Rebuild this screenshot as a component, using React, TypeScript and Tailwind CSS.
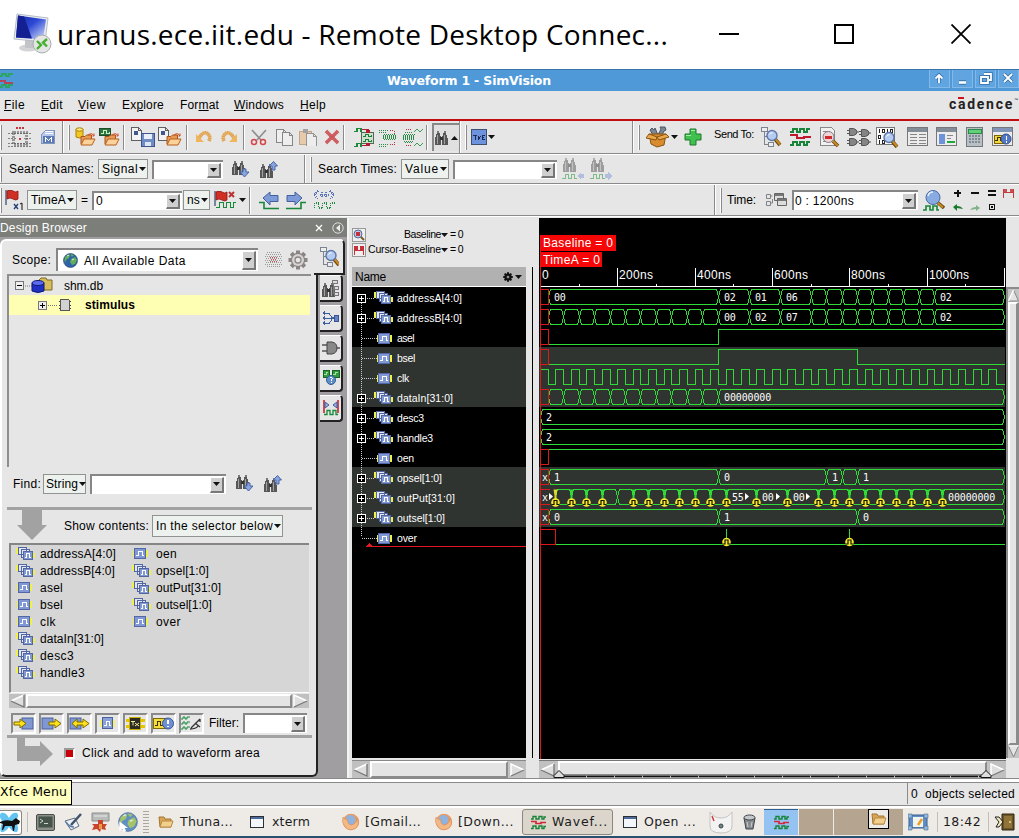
import { useLayoutEffect, useRef, useState, type ReactNode } from "react";

/* ---------- text with a fixed advance width ---------- */
function T({ w, className = "", children }: { w: number; className?: string; children: ReactNode }) {
  const ref = useRef<HTMLSpanElement>(null);
  const [ls, setLs] = useState(0);
  useLayoutEffect(() => {
    const el = ref.current;
    if (!el) return;
    const n = (el.textContent || "").length;
    setLs((prev) => (w - (el.getBoundingClientRect().width - prev * n)) / n);
  }, [w]);
  return (
    <span ref={ref} className={`inline-block shrink-0 whitespace-pre ${className}`} style={{ letterSpacing: ls }}>
      {children}
    </span>
  );
}

/* ---------- small building blocks ---------- */
function Svg({ w, h, children, smooth }: { w: number; h: number; children: ReactNode; smooth?: boolean }) {
  return (
    <svg width={w} height={h} viewBox={`0 0 ${w} ${h}`} className="block shrink-0" fill="none" shapeRendering={smooth ? "auto" : "crispEdges"}>
      {children}
    </svg>
  );
}
const Caret = ({ up }: { up?: boolean }) => (
  <Svg w={7} h={4} smooth>
    <path d={up ? "M0 4H7L3.5 0Z" : "M0 0H7L3.5 4Z"} fill="#111" />
  </Svg>
);
const Handle = () => <div className="h-[25px] w-[2px] shrink-0 border-l border-r border-l-white border-r-[#8a8a8a]" />;
const Edge = ({ className = "" }: { className?: string }) => (
  <div className={`h-full w-[2px] shrink-0 border-l border-r border-l-[#8a8a8a] border-r-white ${className}`} />
);
function MenuButton({ className, w, children }: { className: string; w: number; children: ReactNode }) {
  return (
    <div className={`flex shrink-0 items-center gap-[1px] border border-[#8f9490] bg-[#eef2ee] pl-[3px] ${className}`}>
      <T w={w}>{children}</T>
      <Caret />
    </div>
  );
}
function Entry({ className, children }: { className: string; children?: ReactNode }) {
  return (
    <div className={`flex shrink-0 items-center justify-between border-l-2 border-t-2 border-l-[#868686] border-t-[#868686] bg-white pr-[2px] ${className}`}>
      <div className="flex items-center">{children}</div>
      <div className="my-[1px] flex w-[14px] shrink-0 items-center justify-center self-stretch border-b-2 border-r-2 border-l border-t border-b-[#777] border-l-white border-r-[#777] border-t-white bg-[#cfcfcf]">
        <Caret />
      </div>
    </div>
  );
}

/* ---------- icons ---------- */
const Magnifier = ({ x = 0, y = 0 }: { x?: number; y?: number }) => (
  <g transform={`translate(${x} ${y})`} shapeRendering="auto">
    <path d="M9 9l5 6" stroke="#6b430c" strokeWidth="3.6" />
    <path d="M9.5 9l4.500 5.500" stroke="#c88a24" strokeWidth="2" />
    <circle cx="6" cy="5.500" r="5" fill="#b4ccf2" stroke="#5f77a8" strokeWidth="1.400" />
    <path d="M3.500 4.500q1-2 3-1.800" stroke="#fff" />
  </g>
);
const Folder = ({ x = 0, y = 0 }: { x?: number; y?: number }) => (
  <g transform={`translate(${x} ${y})`} shapeRendering="auto">
    <path d="M1 3.500h4l1.500-1.500h5v9H1z" fill="#e89a55" stroke="#a8541c" />
    <path d="M1 12L4 6h11l-3 6z" fill="#fbd29a" stroke="#b8601f" />
    <path d="M8 2q4-3 6 1l-1.500 0M14 3v-2.500" stroke="#d34a22" />
  </g>
);
const Binoculars = ({ x = 0, y = 0 }: { x?: number; y?: number }) => (
  <g transform={`translate(${x} ${y})`}>
    <path d="M2 2h3v3h1v9H0V8l1-3zM8 2h3l1 3 1 3v6H7V5h1z" fill="#575757" />
    <path d="M2 0h2v2H2zM9 0h2v2H9z" fill="#777" />
    <path d="M2.500 4v9M9.500 4v9" stroke="#a2a2a2" />
    <path d="M5 6h3v3H5z" fill="#333" />
  </g>
);
const FindDown = () => (
  <Svg w={18} h={17}>
    <Binoculars />
    <path d="M11 8h3v3h3l-4.500 5L8 11h3z" fill="#88a5dc" stroke="#4a64a8" shapeRendering="auto" />
  </Svg>
);
const FindUp = () => (
  <Svg w={19} h={17}>
    <Binoculars y={3} />
    <path d="M12 9h3V5h2.500L13.500 0.500 9 5h3z" fill="#88a5dc" stroke="#4a64a8" shapeRendering="auto" />
  </Svg>
);
const FindTime = ({ right }: { right?: boolean }) => (
  <Svg w={23} h={22}>
    <g opacity=".5">
      <Binoculars x={1} />
      <path d="M0 20h3v-4h3v4h3v-4h3v4h3" stroke="#1c9030" />
      <path d={right ? "M15 16h3v-2l4 4-4 4v-2h-3z" : "M22 16h-3v-2l-4 4 4 4v-2h3z"} fill="#7d97d8" />
    </g>
  </Svg>
);
const Waves = () => (
  <Svg w={21} h={20}>
    <path d="M0 5h3V2h4v3h3V2h4v3h3V2h3" stroke="#17843a" strokeWidth="2" />
    <path d="M0 8h7v3h7v-1h7" stroke="#c0182c" strokeWidth="2" />
    <path d="M0 18h3v-3h4v3h3v-3h4v3h3v-3h3" stroke="#17843a" strokeWidth="2" />
  </Svg>
);
const SmallWaves = () => (
  <Svg w={15} h={15} smooth>
    <path d="M0 4h2V1.500h3V4h3V1.500h3V4h2V2h2M0 13.500h2V11h3v2.500h3V11h3v2.500h2v-2h2" stroke="#17843a" strokeWidth="1.400" />
    <path d="M0 6.500h5v2h5v-1h5" stroke="#d2283a" strokeWidth="1.700" />
  </Svg>
);
const Sig = () => (
  <Svg w={17} h={13}>
    <path d="M1 3h15v7H1z" fill="#f0f04a" />
    <path d="M2.500 1.500h11v10h-11z" fill="#8098d4" stroke="#5467a4" />
    <path d="M4 8.500h2.500v-4h4v4H12" stroke="#fff" />
  </Svg>
);
const BusSig = () => (
  <Svg w={19} h={14}>
    <path d="M0 1h3v6H0zM16 6h3v5h-3z" fill="#f0f04a" />
    <path d="M2.500 0.500h8v7h-8zM5.500 2.500h8v8h-8z" fill="#e2e7f6" stroke="#53669f" />
    <path d="M7.500 4.500h9v8h-9z" fill="#8098d4" stroke="#53669f" />
    <path d="M9 10.500h1.500v-4h3v4H15" stroke="#fff" />
  </Svg>
);
const PortBox = ({ kind }: { kind: "in" | "out" | "inout" }) => (
  <Svg w={21} h={13} smooth>
    <rect x={kind === "in" ? 9 : 1} y="1" width="11" height="11" fill="#7f98d2" stroke="#4b5f9c" />
    <path
      d={kind === "in" ? "M1 5h6V2l6 4.500L7 11V8H1z" : kind === "out" ? "M8 5h6V2l6 4.500L14 11V8H8z" : "M3 6.500L8 2v3h6V2l6 4.500L14 11V8H8v3z"}
      fill="#ffe11a"
      stroke="#7c6a00"
    />
  </Svg>
);
const BigFlag = ({ x = 0, y = 0 }: { x?: number; y?: number }) => (
  <g transform={`translate(${x} ${y})`} shapeRendering="auto">
    <path d="M1 0v15" stroke="#566584" strokeWidth="1.500" />
    <path d="M2 1q3-2 6 0t5 0v8q-2 2-5 0t-6 0z" fill="#cf3023" stroke="#8e1410" strokeWidth=".8" />
  </g>
);
const Window = ({ kind }: { kind: "table" | "side" | "alert" }) => (
  <Svg w={22} h={20}>
    <path d="M.5.500h20v18H.5z" fill="#ececec" stroke="#777" />
    <path d="M1 1h19v4H1z" fill={kind === "alert" ? "#8195b9" : "#838d98"} />
    {kind === "table" && <path d="M3 7.500h7M12 7.500h7M3 10.500h7M12 10.500h7M3 13.500h7M12 13.500h7M3 16.500h7M12 16.500h7" stroke="#858585" />}
    {kind === "side" && (
      <>
        <path d="M3 7h6v10H3z" fill="#6d93d9" />
        <path d="M11 8h6M11 11.500h4" stroke="#888" />
        <path d="M11 14.500h8" stroke="#20a83a" strokeWidth="2" />
      </>
    )}
    {kind === "alert" && (
      <>
        <path d="M2 8h9v8H2z" fill="#f5d63c" stroke="#7d6500" />
        <path d="M3 13.500h2v-3h3v3h2" stroke="#3c3000" />
        <circle cx="14" cy="12" r="5" fill="#5177c5" stroke="#32508f" shapeRendering="auto" />
        <path d="M13.500 9h1.500v4h-1.500zM13.500 14h1.500v1.500h-1.500z" fill="#fff" />
      </>
    )}
  </Svg>
);
const Tree = ({ w = 22, h = 22 }: { w?: number; h?: number }) => (
  <Svg w={w} h={h}>
    <path d="M1.500 1.500h6v4h-6zM8.500 8.500h5v4h-5zM8.500 16.500h5v4h-5z" fill="#eee" stroke="#7c8490" />
    <path d="M4.500 6v12.500H8M4.500 10.500H8" stroke="#7c8490" />
    <Magnifier x={6} y={4} />
  </Svg>
);
const Gates = ({ x = 0, y = 0 }: { x?: number; y?: number }) => (
  <g transform={`translate(${x} ${y})`} shapeRendering="auto">
    <path d="M0 2.500h3M0 5.500h3M9 4h3" stroke="#555" />
    <path d="M2.500.500h4q3.500 1 3.500 3.500T6.500 7.500h-4z" fill="#858585" stroke="#555" />
  </g>
);
const Page = ({ x = 0, y = 0 }: { x?: number; y?: number }) => (
  <g transform={`translate(${x} ${y})`}>
    <path d="M.5.500h7l3 3v10H.5z" fill="#f2f2f2" stroke="#5f5f5f" />
    <path d="M7.500.500v3h3" stroke="#5f5f5f" />
  </g>
);
const WinGlyph = () => (
  <Svg w={15} h={13}>
    <path d="M.5.500h13v11H.5z" fill="#f3f6fb" stroke="#2b2f36" />
    <path d="M1 1h12v2H1z" fill="#4c6a9c" />
  </Svg>
);
const Firefox = () => (
  <Svg w={18} h={18} smooth>
    <circle cx="9" cy="9" r="8.200" fill="#ea9a62" />
    <circle cx="8.500" cy="7" r="5" fill="#8fb2df" />
    <path d="M1 4q2 3 5 3-1 2 1 4t5 0 3-6q3 6-1 10-7 4-11-1T1 4z" fill="#f3b883" stroke="#d5844f" strokeWidth=".5" />
  </Svg>
);
const Earth = ({ s = 15, pale }: { s?: number; pale?: boolean }) => (
  <svg width={s} height={s} viewBox="0 0 15 15" className="block shrink-0">
    <circle cx="7.500" cy="7.500" r="7" fill={pale ? "#5f8fc4" : "#2f62a6"} stroke={pale ? "#4a6f9a" : "#1e3c66"} strokeWidth=".6" />
    <path d="M2 4q3-3 5-2l-1 3-3 2-1 3q-1-3 0-6zM8 6l4-2 2 3-2 4-3 1-2-3zM7 1l4 1-2 2z" fill={pale ? "#a5c46a" : "#5fae5a"} />
    <path d="M4 3l2-1M9 7l2-1" stroke="#dff0df" />
    {pale && <path d="M1 7v7l2-1.500 1.500 2.500 1.500-1-1-2h2.500z" fill="#fff" />}
  </svg>
);
const Gear = ({ s, color, fill }: { s: number; color: string; fill: string }) => (
  <svg width={s} height={s} viewBox="-10 -10 20 20" className="block shrink-0">
    {[0, 45, 90, 135].map((a) => (
      <path key={a} d="M-2-9.500h4v19h-4z" fill={color} transform={`rotate(${a})`} />
    ))}
    <circle r="7.200" fill={color} />
    <circle r="6" fill={fill === "none" ? color : "#d6d2d0"} />
    <circle r="3" fill={fill === "none" ? "#b0b0b0" : "#e6e6e6"} stroke={color} strokeWidth="1.300" />
  </svg>
);
const ScrollArrow = ({ left }: { left?: boolean }) => (
  <div className="flex w-[17px] shrink-0 items-center justify-center self-stretch bg-[#c0c0c0]">
    <Svg w={15} h={14} smooth>
      <path d={left ? "M14 1v12L1 7z" : "M1 1v12L14 7z"} fill="#dedede" />
      <path d={left ? "M14 1L1 7" : "M1 13V1l13 6"} stroke="#fff" strokeWidth="1.500" />
      <path d={left ? "M14 1v12L1 7" : "M1 13L14 7"} stroke="#777" strokeWidth="1.300" />
    </Svg>
  </div>
);
const Thumb = ({ className }: { className: string }) => (
  <div className={`border-b-2 border-l-2 border-r-2 border-t-2 border-b-[#8b8b8b] border-l-white border-r-[#8b8b8b] border-t-white bg-[#e4e4e4] ${className}`} />
);

/* ---------- remote desktop frame ---------- */
function RemoteTitle() {
  return (
    <div className="flex h-[69px] shrink-0 items-center bg-white pb-[1px] text-black">
      <div className="w-[57px] shrink-0 pl-[12px]">
        <Svg w={40} h={42} smooth>
          <defs>
            <linearGradient id="scr" x1="0" y1="0" x2="1" y2="1">
              <stop offset="0" stopColor="#16269e" />
              <stop offset=".45" stopColor="#2d49d6" />
              <stop offset="1" stopColor="#dbe6fb" />
            </linearGradient>
          </defs>
          <ellipse cx="16" cy="35" rx="9" ry="3.500" fill="#d4d4d6" />
          <path d="M13 27h8l1 8h-9z" fill="#c2c4c8" />
          <path d="M5 1l31 4-3 24-31-3z" fill="#e8ecf2" stroke="#b6bcc6" />
          <path d="M6 2.500l28 4-3 20-27-2z" fill="url(#scr)" />
          <path d="M6 2.500l6 1 8 22-16-1z" fill="#141f92" />
          <circle cx="30" cy="31" r="9" fill="#e4e6e4" stroke="#a9adab" />
          <path d="M25 28l4 4-4 4M35 26l-4 3.500 4 4" stroke="#45b02f" strokeWidth="2.400" />
        </Svg>
      </div>
      <T w={611} className="font-['Open_Sans'] text-[28px] leading-[40px]">uranus.ece.iit.edu - Remote Desktop Connec...</T>
      <div className="ml-[51px] h-[2px] w-[20px] bg-black" />
      <div className="ml-[95px] h-[20px] w-[20px] border-2 border-black" />
      <div className="ml-[97px]">
        <Svg w={20} h={20} smooth>
          <path d="M.5.500l19 19M19.500.500l-19 19" stroke="#000" strokeWidth="1.800" />
        </Svg>
      </div>
    </div>
  );
}

function WindowTitle() {
  return (
    <div className="flex h-[22px] shrink-0 items-center border-t border-[#3773a8] bg-[#4f99d9]">
      <div className="w-[387px] shrink-0"><Svg w={13} h={15}><path d="M0 3h2v-2h4v2h3v-2h4M0 14h2v-2h4v2h3v-2h4" stroke="#2aa564" strokeWidth="2" /><path d="M0 7.500h5v2h8" stroke="#b1455c" strokeWidth="2" /></Svg></div>
      <T w={164} className="font-['DejaVu_Sans'] text-[12.5px] font-bold leading-[20px] text-white">Waveform 1 - SimVision</T>
      <div className="ml-auto flex h-[18px] gap-[2px] self-start">
        {["M9 13V6M5.500 8.500L9 5l3.500 3.500", "M6 12.500h7", "M8 4h7v6h-2M5 7h7v6H5z", "M5 4l8 8M13 4l-8 8"].map((d, i) => (
          <div key={i} className="w-[21px] border border-t-0 border-[#82b9e8] bg-[#60a5df]">
            <Svg w={19} h={17} smooth>
              <path d={d} stroke="#3470a6" strokeWidth={i === 1 ? 4.500 : 3.400} />
              <path d={d} stroke="#fff" strokeWidth={i === 1 ? 2.600 : 1.800} />
            </Svg>
          </div>
        ))}
      </div>
    </div>
  );
}

function MenuBar() {
  return (
    <div className="flex h-[30px] shrink-0 items-center border-b-2 border-[#c00d12] pb-[1px] pl-[4px] text-[12px]">
      <div className="w-[37px]"><T w={21}><u>F</u>ile</T></div>
      <div className="w-[37px]"><T w={22}><u>E</u>dit</T></div>
      <div className="w-[44px]"><T w={28}><u>V</u>iew</T></div>
      <div className="w-[58px]"><T w={42}>Ex<u>p</u>lore</T></div>
      <div className="w-[54px]"><T w={39}>For<u>m</u>at</T></div>
      <div className="w-[66px]"><T w={50}><u>W</u>indows</T></div>
      <T w={26}><u>H</u>elp</T>
      <div className="ml-auto flex flex-col pr-[1px]">
        <div className="ml-[9px] h-[2px] w-[6px] bg-[#d0131b]" />
        <div className="-mt-[3px] flex"><T w={65} className="font-['Roboto'] text-[14px] font-bold leading-[16px] text-[#222]">cadence</T><span className="text-[4px] leading-[8px]">™</span></div>
      </div>
    </div>
  );
}

/* ---------- toolbars ---------- */
function MainToolbar() {
  return (
    <div className="flex h-[33px] shrink-0 items-center border-b border-[#8a8a8a] bg-[#e6e6e6]">
      <div className="w-[8px]"><Handle /></div>
      <div className="w-[33px]"><Svg w={24} h={22}><g stroke="#555" strokeDasharray="2 1"><path d="M5.500 6.500h13v12h-13z" strokeWidth="3" opacity=".55" /><path d="M0 7.500h24M0 12.500h24M0 17.500h24M0 20.500h24" opacity=".7" /></g><path d="M8 9h8v7H8z" fill="#e6e6e6" /><path d="M8 1.500h9M11 12.500h2" stroke="#c8353a" strokeWidth="2" strokeDasharray="2 1" /></Svg></div>
      <div className="w-[21px]"><Svg w={15} h={16}><path d="M.5 5.500l4-4h9v13H.5z" fill="#b7c9ea" stroke="#8195ba" /><path d="M4 2.500h8M4 4.500h8" stroke="#fff" /><path d="M2 7h11v7H2z" fill="#5a7ab5" /><path d="M4.500 13V9L7.500 11.500 10.500 9v4" stroke="#fff" /></Svg></div>
      <Edge />
      <div className="w-[11px] pl-[4px]"><Handle /></div>
      <div className="w-[24px]"><Svg w={21} h={20} smooth><path d="M1 2v8q3.500 2 7 0V2z" fill="#f3c824" stroke="#a87e08" /><ellipse cx="4.500" cy="2.500" rx="3.500" ry="1.700" fill="#ffea7a" stroke="#a87e08" /><Folder x={5} y={6} /></Svg></div>
      <div className="w-[24px]"><Svg w={21} h={20}><path d="M.5 1.500h11v7H.5z" fill="#2d7440" stroke="#1c4c2a" /><path d="M2 6.500h2v-3h3v3h3v-2" stroke="#c8f0c0" /><Folder x={5} y={6} /></Svg></div>
      <div className="w-[8px]"><Edge className="!h-[25px]" /></div>
      <div className="w-[27px]"><Svg w={25} h={20}><Page /><path d="M3 4h4v4H3z" fill="#42588c" /><path d="M10.500 6.500h13v13h-13z" fill="#6f8dc4" stroke="#3d5588" /><path d="M13 7h8v5h-8z" fill="#e9effa" /><path d="M14 15h6v4h-6z" fill="#dde6f5" /></Svg></div>
      <div className="w-[28px]"><Svg w={25} h={20}><Page /><path d="M3 4h4v4H3z" fill="#42588c" /><Folder x={8} y={6} /></Svg></div>
      <div className="w-[9px]"><Edge className="!h-[25px]" /></div>
      <div className="w-[24px]"><Svg w={19} h={17} smooth><path d="M4 9Q9 1 13 5q3 3 1 7" stroke="#eab672" strokeWidth="3.500" /><path d="M4 9Q9 1 13 5q3 3 1 7" stroke="#d48d2c" strokeWidth="3.500" strokeDasharray="1 1" opacity=".5" /><path d="M1 5v8h8z" fill="#efb55c" /></Svg></div>
      <div className="w-[24px]"><Svg w={19} h={17} smooth><path d="M15 9Q10 1 6 5q-3 3-1 7" stroke="#eab672" strokeWidth="3.500" /><path d="M15 9Q10 1 6 5q-3 3-1 7" stroke="#d48d2c" strokeWidth="3.500" strokeDasharray="1 1" opacity=".5" /><path d="M18 5v8h-8z" fill="#efb55c" /></Svg></div>
      <div className="w-[7px]"><Edge className="!h-[25px]" /></div>
      <div className="w-[26px]"><Svg w={18} h={17} smooth><path d="M2 1l9 10M16 1L7 11" stroke="#8d8d8d" strokeWidth="1.600" /><circle cx="4" cy="13" r="2.500" stroke="#d2484b" strokeWidth="1.500" /><circle cx="13" cy="13" r="2.500" stroke="#d2484b" strokeWidth="1.500" /></Svg></div>
      <div className="w-[23px]"><Svg w={18} h={17}><g opacity=".7"><Page /><Page x={6} y={3} /></g></Svg></div>
      <div className="w-[25px]"><Svg w={18} h={17}><g opacity=".6"><path d="M.5 2.500h12v13H.5z" fill="#e6b982" stroke="#a87c4c" /><path d="M4 0h5v4H4z" fill="#777" /><Page x={7} y={4} /></g></Svg></div>
      <div className="w-[19px]"><Svg w={17} h={16} smooth><path d="M2 2l12 12M14 2L2 14" stroke="#d8686b" strokeWidth="3.400" /><path d="M2 2l12 12M14 2L2 14" stroke="#a8383c" strokeWidth="3.400" strokeDasharray="1 1" opacity=".4" /></Svg></div>
      <div className="w-[11px]"><Edge className="!h-[25px]" /></div>
      <div className="w-[25px]"><Svg w={22} h={21}><path d="M0 4.500h3v-3h4v3M0 19.500h3v-3h4v3" stroke="#1c8a3a" strokeWidth="1.500" /><path d="M7.500 5.500h12v11h-12z" fill="#cfe0cf" stroke="#4c6b52" /><path d="M9 9.500h2v-2h3v2h3v-2M9 14.500h2v-2h3v2h3v-2" stroke="#19803a" /><path d="M8 2.500h6v3M8 18.500h6v-2" stroke="#b21c2e" /><path d="M12 3h4v3h-4zM12 16h4v3h-4z" fill="#b21c2e" /></Svg></div>
      <div className="w-[23px]"><Svg w={20} h={21}><g strokeDasharray="1 1"><path d="M0 3.500h9M0 5.500h7M0 17.500h9M0 19.500h7M5 7.500h12M4 8.500h14M4 9.500h14M4 10.500h14M4 11.500h14M5 12.500h12" stroke="#2a8a46" /><path d="M11 3.500h4v3M11 17.500h4v-3" stroke="#b8303f" /></g></Svg></div>
      <div className="w-[24px]"><Svg w={22} h={21}><g strokeDasharray="1 1"><path d="M3 5.500h8M2 7.500h11M1 8.500h12M1 9.500h12M1 10.500h12M1 11.500h12M1 12.500h12M2 14.500h9M3 15.500h8" stroke="#2a8a46" /><path d="M4 2.500h5M4 18.500h5" stroke="#b8303f" /></g><path d="M12 5l3-3 3 3 3-3M12 19l3-3 3 3 3-3" stroke="#3c9a56" /></Svg></div>
      <div className="w-[6px]"><Edge className="!h-[25px]" /></div>
      <div className="flex h-[28px] w-[27px] shrink-0 items-center gap-[3px] border-l-2 border-t-2 border-l-[#888] border-t-[#888] bg-[#e0e0e0] pl-[1px]"><Svg w={13} h={15}><Binoculars /></Svg><Caret up /></div>
      <Edge />
      <div className="w-[10px] pl-[4px]"><Handle /></div>
      <div className="flex w-[161px] items-center gap-[1px]"><Svg w={16} h={17}><path d="M.5.500h15v15H.5z" fill="#6e93de" stroke="#3f4f6c" /><path d="M2 6.500h4M4 6.500v4M7 7.500l2.500 3M9.500 7.500l-2.500 3M14 6.500h-3v4h3M11 8.500h2" stroke="#1c2b50" /></Svg><Caret /></div>
      <Edge />
      <div className="w-[12px] pl-[4px]"><Handle /></div>
      <div className="flex w-[38px] items-center gap-[2px]"><Svg w={23} h={22} smooth><path d="M7 9L4 4l2-2 2 2 1-2 3 7M12 9l3-6-1-2 5 0 1 3-2 1-2 4" fill="#7d8794" stroke="#4b5766" /><path d="M3 8h17l-2 11-7 2-6-3z" fill="#d98c2e" stroke="#8a5312" /><path d="M3 8l-3 4 10 2 1-3zM20 8l3 3-10 3-2-3z" fill="#e9a84c" stroke="#8a5312" /></Svg><Caret /></div>
      <div className="w-[30px]"><Svg w={18} h={18} smooth><path d="M6 1h6v5h5v6h-5v5H6v-5H1V6h5z" fill="#3fc04f" stroke="#1c7a2a" /><path d="M7 2.500h4M2 7.500h5" stroke="#a6eba8" /></Svg></div>
      <div className="w-[46px] pb-[9px]"><T w={40} className="text-[11px]">Send To:</T></div>
      <div className="w-[30px]"><Tree /></div>
      <div className="w-[29px]"><Waves /></div>
      <div className="w-[28px]"><Svg w={22} h={21}><path d="M1.500.500h11l3 3v15h-14z" fill="#f0f0f0" stroke="#888" /><path d="M4 4h7M4 14h7" stroke="#888" /><path d="M14 14l5 5" stroke="#6b430c" strokeWidth="3.500" shapeRendering="auto" /><path d="M14 14l5 5" stroke="#c88a24" strokeWidth="2" shapeRendering="auto" /><circle cx="9.500" cy="10" r="5.500" fill="#f2d3d3" stroke="#7d7d8c" shapeRendering="auto" /><path d="M6 9h7v3H6z" fill="#cf2a2e" /></Svg></div>
      <div className="w-[29px]"><Svg w={24} h={20}><Gates y={1} /><Gates x={12} y={2} /><Gates y={11} /><Gates x={12} y={11} /></Svg></div>
      <div className="w-[31px]"><Svg w={23} h={21}><path d="M.5.500h18v17H.5z" fill="#fafafa" stroke="#777" /><path d="M3.500 2v4M6.500 2.500h2v3h-2zM11.500 2v4M14.500 2.500h2v3h-2zM2.500 8.500h2v3h-2zM16.500 8v4M3.500 13v4M6.500 13.500h2v3h-2z" stroke="#222" /><Magnifier x={7} y={5} /></Svg></div>
      <div className="w-[29px]"><Window kind="table" /></div>
      <div className="w-[30px]"><Window kind="side" /></div>
      <div className="w-[26px]"><Svg w={17} h={20}><path d="M.5.500h16v19H.5z" fill="#b9c0c4" stroke="#717a80" /><path d="M2 2h13v4H2z" fill="#62d17a" stroke="#2c8a45" /><path d="M3 9h11M3 12h11M3 15h11" stroke="#7f8b96" strokeWidth="2" strokeDasharray="2 1" /></Svg></div>
      <Window kind="alert" />
    </div>
  );
}

function SearchToolbar() {
  return (
    <div className="flex h-[30px] shrink-0 items-center border-b border-t border-b-[#8a8a8a] border-t-white bg-[#e6e6e6] text-[12px]">
      <div className="w-[9px]"><Handle /></div>
      <div className="w-[89px]"><T w={85}>Search Names:</T></div>
      <div className="w-[54px]"><MenuButton className="h-[20px] w-[50px]" w={36}>Signal</MenuButton></div>
      <div className="w-[80px]"><Entry className="h-[19px] w-[71px]" /></div>
      <div className="w-[28px]"><FindDown /></div>
      <div className="w-[44px]"><FindUp /></div>
      <Edge />
      <div className="w-[12px] pl-[4px]"><Handle /></div>
      <div className="w-[83px]"><T w={79}>Search Times:</T></div>
      <div className="w-[52px]"><MenuButton className="h-[20px] w-[48px]" w={34}>Value</MenuButton></div>
      <div className="w-[109px]"><Entry className="h-[19px] w-[104px]" /></div>
      <div className="w-[28px]"><FindTime /></div>
      <FindTime right />
    </div>
  );
}

function TimeToolbar() {
  return (
    <div className="flex h-[32px] shrink-0 items-center border-b border-t border-b-[#8a8a8a] border-t-white bg-[#e6e6e6] text-[12px]">
      <div className="w-[5px]"><Handle /></div>
      <div className="w-[22px]"><Svg w={20} h={21} smooth><BigFlag /><path d="M9 14l4 5M13 14l-4 5" stroke="#233c78" strokeWidth="1.300" /><path d="M15 14l2-1v7" stroke="#111" /></Svg></div>
      <div className="w-[54px]"><MenuButton className="h-[20px] w-[50px]" w={35}>TimeA</MenuButton></div>
      <div className="w-[11px]">=</div>
      <div className="w-[91px]"><Entry className="h-[19px] w-[90px]"><span className="pl-[2px]">0</span></Entry></div>
      <div className="w-[31px]"><MenuButton className="h-[20px] w-[27px]" w={13}>ns</MenuButton></div>
      <div className="flex w-[35px] items-center gap-[2px]"><Svg w={23} h={18}><BigFlag /><path d="M15 1l5 5M20 1l-5 5" stroke="#b83236" strokeWidth="2" shapeRendering="auto" /><path d="M2 16.500h3v-5h4v5h3v-5h4v5h3v-5h3" stroke="#168a38" /></Svg><Caret /></div>
      <div className="w-[10px]"><Edge className="!h-[27px]" /></div>
      <div className="w-[27px]"><Svg w={21} h={19} smooth><path d="M0 11.500h5v6h15" stroke="#17853a" strokeWidth="1.600" /><path d="M4 7l7-6v3.500h8v6h-8V14z" fill="#7d9ad9" stroke="#445f9d" /></Svg></div>
      <div className="w-[27px]"><Svg w={21} h={19} smooth><path d="M0 17.500h15v-6h5" stroke="#17853a" strokeWidth="1.600" /><path d="M16 7L9 1v3.500H1v6h8V14z" fill="#7d9ad9" stroke="#445f9d" /></Svg></div>
      <div className="w-[401px]"><Svg w={23} h={20}><g strokeDasharray="1 1"><path d="M5 1L1 5l4 4M17 1l4 4-4 4M7 5h9M9 2v6M13 2v6" stroke="#5a75b8" strokeWidth="1.500" /><path d="M1.500 18v-5h4v5h4v-5h4v5h4v-5h4" stroke="#1f8a3c" strokeWidth="1.300" /></g></Svg></div>
      <Edge />
      <div className="w-[11px] pl-[4px]"><Handle /></div>
      <div className="w-[38px]"><T w={29}>Time:</T></div>
      <div className="w-[27px]"><Svg w={22} h={15} smooth><path d="M1.500 1.500h4v4h-4zM1.500 8.500h4v4h-4zM5 3h2.500M5 10h2.500v-4" stroke="#7f8286" /><path d="M9.500.500h9v7h-9zM12.500 5.500h9v7h-9z" fill="#ddd" stroke="#666" /><path d="M10 2h8M13 7h8" stroke="#777" strokeWidth="2" /></Svg></div>
      <div className="w-[131px]"><Entry className="h-[20px] w-[126px]"><span className="pl-[1px]"><T w={59}>0 : 1200ns</T></span></Entry></div>
      <div className="w-[30px]"><Svg w={23} h={21} smooth><path d="M14 12l7 6" stroke="#6b430c" strokeWidth="3.600" /><path d="M14 12l6 5.500" stroke="#c88a24" strokeWidth="2" /><circle cx="10" cy="7.500" r="7" fill="#88abe2" stroke="#4a68a4" /><path d="M5 6q1-4 5-4" stroke="#e6effc" strokeWidth="1.500" /><path d="M0 20h3v-4h4v4h3v-4h4v4h2" stroke="#17853a" strokeWidth="1.600" /></Svg></div>
      <Svg w={64} h={24}>
        <path d="M1 5h7M4.500 1.500v7M18 5h8M35 3h8M35 7h8" stroke="#111" strokeWidth="2" />
        <path d="M50.500 1v9M60.500 1v9M51 4.500h9" stroke="#c03c42" />
        <path d="M51 1h3v3h-3zM57 1h3v3h-3z" fill="#c95055" />
        <path d="M0 19l4-3v2q4 0 6 3l-6-1v3z" fill="#1a7a2c" shapeRendering="auto" />
        <path d="M27 20l-4-3v2q-4 0-6 3l6-1v2z" fill="#7fb488" shapeRendering="auto" />
        <path d="M36.500 16.500h5v5h-5zM38.500 18.500h1v1h-1z" stroke="#111" />
      </Svg>
    </div>
  );
}

/* ---------- design browser ---------- */
const Expander = ({ minus }: { minus?: boolean }) => (
  <Svg w={9} h={9}>
    <path d="M.5.500h8v8h-8z" fill="#eee" stroke="#777" />
    <path d={minus ? "M2 4.500h5" : "M2 4.500h5M4.500 2v5"} stroke="#000" />
  </Svg>
);

const contents: [string, number, boolean][][] = [
  [["addressA[4:0]", 76, true], ["addressB[4:0]", 75, true], ["asel", 23, false], ["bsel", 23, false], ["clk", 16, false], ["dataIn[31:0]", 64, true], ["desc3", 34, true], ["handle3", 45, true]],
  [["oen", 21, false], ["opsel[1:0]", 53, true], ["outPut[31:0]", 65, true], ["outsel[1:0]", 56, true], ["over", 25, false]],
];

const filters: ReactNode[] = [
  <PortBox kind="in" />,
  <PortBox kind="out" />,
  <PortBox kind="inout" />,
  <Svg w={21} h={13}><path d="M3 3h15v7H3z" fill="#f3f36a" /><path d="M5.500.500h10v11h-10z" fill="#8aa1d8" stroke="#4b5f9c" /><path d="M7 8.500h2.500v-4h3v4H14" stroke="#fff" /></Svg>,
  <Svg w={21} h={13}><path d="M1 3.500h19M1 9.500h19" stroke="#e6c400" strokeWidth="3" /><path d="M4.500.500h11v12h-11z" fill="#2b2b22" stroke="#c9ac00" /><path d="M6 4.500h4M8 4.500v4M10 6l4 3M14 6l-4 3" stroke="#f5e8a0" shapeRendering="auto" /></Svg>,
  <Svg w={21} h={13}><path d="M.5 1.500h13v10H.5z" fill="#f5dc3c" stroke="#7d6a00" /><path d="M2 8.500h2v-4h3v4h3v-4h2" stroke="#3c3400" /><circle cx="15" cy="6.500" r="5.500" fill="#6f8fd4" stroke="#3a559a" shapeRendering="auto" /><path d="M15 3v4M15 9v1" stroke="#fff" strokeWidth="1.500" /></Svg>,
  <Svg w={21} h={14} smooth><path d="M0 3h2V1h2v2h2V1h3M0 8h2V6h2v2h2V6h3M0 13h2v-2h2v2h2v-2h3" stroke="#1b8a3c" /><path d="M10 12l9-9M9 13q6 0 8-3M19 3v3M14 7l5 4" stroke="#333" strokeWidth="1.300" /></Svg>,
];

function BrowserPanel() {
  return (
    <div className="mt-[2px] flex h-[538px] w-[318px] shrink-0 flex-col rounded-[6px] rounded-tr-none border-b-2 border-l-2 border-r-2 border-t-2 border-b-[#222] border-l-white border-r-[#222] border-t-white bg-[#e6e6e6] pl-[5px]">
      <div className="flex h-[33px] shrink-0 items-center pt-[4px]">
        <div className="w-[49px] pl-[5px]"><T w={39}>Scope:</T></div>
        <div className="w-[209px]">
          <Entry className="h-[23px] w-[202px]"><div className="flex items-center gap-[6px] pl-[5px]"><Earth /><T w={102}>All Available Data</T></div></Entry>
        </div>
        <div className="w-[23px]"><Svg w={18} h={16}><g strokeDasharray="1 1"><path d="M2 .5h14M1 2.500h16M0 4.500h18M1 6.500h16M0 8.500h18M1 10.500h16M0 12.500h18M2 14.500h14" stroke="#999" /><path d="M5 5.500h8M6 7.500h6M5 9.500h8" stroke="#d05054" /></g></Svg></div>
        <Gear s={20} color="#8a8583" fill="#ddd" />
      </div>
      <div className="flex h-[193px] w-[304px] shrink-0 flex-col border-l-2 border-t-2 border-[#8e8e8e]">
        <div className="flex h-[19px] items-center pl-[6px]">
          <Expander minus />
          <Svg w={40} h={17} smooth>
            <path d="M1 9h8" stroke="#777" strokeDasharray="1 1" />
            <path d="M14 4l3-3h5l1 2h5v10H14z" fill="#d8bd5c" stroke="#7d6820" />
            <path d="M8 6v8q6 3 12 0V6z" fill="#1f2fc4" stroke="#101a70" />
            <ellipse cx="14" cy="6" rx="6" ry="2.500" fill="#5b6cf2" stroke="#101a70" />
          </Svg>
          <T w={39}>shm.db</T>
        </div>
        <div className="flex h-[20px] w-[301px] items-center bg-[#ffffb4] pl-[29px]">
          <Expander />
          <Svg w={38} h={14}>
            <path d="M1 7.500h10" stroke="#777" strokeDasharray="1 1" />
            <path d="M12 3.500h12M12 7.500h12M12 10.500h12" stroke="#444" />
            <path d="M13.500 1.500h8l1 1v10h-9z" fill="#d2d2d2" stroke="#555" />
          </Svg>
          <T w={50} className="font-bold">stimulus</T>
        </div>
      </div>
      <div className="flex h-[40px] shrink-0 items-center pb-[7px]">
        <div className="w-[36px] pl-[6px]"><T w={28}>Find:</T></div>
        <div className="w-[47px]"><MenuButton className="h-[20px] w-[43px] !pl-[2px]" w={32}>String</MenuButton></div>
        <div className="w-[146px]"><Entry className="h-[20px] w-[136px]" /></div>
        <div className="w-[28px]"><FindDown /></div>
        <FindUp />
      </div>
      <div className="h-[3px] w-[305px] shrink-0 bg-[#a2a2a2]" />
      <div className="flex h-[33px] shrink-0 pl-[10px]">
        <div className="w-[47px]"><Svg w={30} h={30} smooth><path d="M5 0h20v15h5L15 30 0 15h5z" fill="#a2a2a2" /></Svg></div>
        <div className="flex h-[31px] items-center">
          <div className="w-[88px]"><T w={85}>Show contents:</T></div>
          <MenuButton className="h-[22px] w-[131px]" w={117}>In the selector below</MenuButton>
        </div>
      </div>
      <div className="ml-[2px] flex h-[150px] w-[300px] shrink-0 border-b border-l-2 border-t-2 border-b-white border-l-[#858585] border-t-[#858585] bg-[#d6d6d6]">
        {contents.map((col, c) => (
          <div key={c} className="w-[116px] shrink-0 pl-[5px]">
            {col.map(([name, w, bus]) => (
              <div key={name} className="flex h-[17px] items-center">
                <div className="w-[24px] shrink-0">{bus ? <BusSig /> : <Sig />}</div>
                <T w={w}>{name}</T>
              </div>
            ))}
          </div>
        ))}
      </div>
      <div className="ml-[2px] mt-[1px] flex h-[14px] w-[300px] shrink-0 items-stretch overflow-hidden bg-[#a8a8a8]">
        <ScrollArrow left />
        <Thumb className="flex-1" />
        <ScrollArrow />
      </div>
      <div className="flex h-[27px] shrink-0 items-center pl-[4px] pt-[3px]">
        {filters.map((f, i) => (
          <div key={i} className="mr-[3px] flex h-[21px] w-[25px] shrink-0 items-center justify-center border-b-2 border-l-2 border-r-2 border-t-2 border-b-white border-l-[#8a8a8a] border-r-white border-t-[#8a8a8a]">{f}</div>
        ))}
        <div className="ml-[2px] w-[34px]"><T w={30}>Filter:</T></div>
        <Entry className="h-[20px] w-[64px]" />
      </div>
      <div className="h-[3px] w-[305px] shrink-0 bg-[#a2a2a2]" />
      <div className="flex h-[30px] items-center pl-[10px]">
        <div className="w-[47px] self-start"><Svg w={36} h={28} smooth><path d="M0 0h8v8h15V3l13 13-13 12v-5H0z" fill="#a2a2a2" /></Svg></div>
        <div className="mr-[7px] h-[11px] w-[11px] border-2 border-b-white border-l-[#999] border-r-white border-t-[#999] bg-[#c8000a]" />
        <T w={178}>Click and add to waveform area</T>
      </div>
    </div>
  );
}

const tabIcons: ReactNode[] = [
  <Svg w={18} h={18}><Binoculars y={4} /><path d="M10.500 1.500h5v3h-5zM12.500 7.500h4v3h-4zM12.500 13.500h4v3h-4zM11.500 5v10" fill="#ddd" stroke="#777" /></Svg>,
  <Svg w={18} h={16}><path d="M1 3.500h6l3 4h3M1 8.500h12M1 13.500h6l3-4" stroke="#3d5da0" /><path d="M3 1v4L0 3zM3 6v4L0 8zM3 11v4l-3-2z" fill="#3d5da0" /><path d="M12.500 5.500h4v6h-4z" fill="#6583c4" stroke="#39558f" /></Svg>,
  <Svg w={18} h={14} smooth><path d="M0 4h6M0 10h6M14 7h4" stroke="#555" strokeWidth="1.300" /><path d="M5 1h5q5 1 5 6t-5 6H5z" fill="#888" stroke="#444" /></Svg>,
  <Svg w={18} h={18}><path d="M1 1h6v7H1zM10 1h7v7h-7z" fill="#2f9a3c" stroke="#1b6025" /><path d="M2 5.500h2v-2h2M11 5.500h2v-2h3" stroke="#a0e0a0" /><circle cx="9" cy="11" r="4.500" fill="#5f8fc8" stroke="#335a90" shapeRendering="auto" /><path d="M7.500 9.500q1.500-2 3 0l-1.500 2M9 13v1" stroke="#fff" /></Svg>,
  <Svg w={18} h={17} smooth><path d="M2 1v13M16 1v13" stroke="#cc2230" strokeWidth="1.600" /><path d="M3 3l4 3-4 3zM15 3l-4 3 4 3z" fill="#9db2dc" stroke="#3d5da0" /><path d="M2 15.500h3v-4h3v4h3v-4h3v4h2" stroke="#168a38" strokeWidth="1.300" /></Svg>,
];

function DesignBrowser() {
  return (
    <div className="flex w-[347px] shrink-0 flex-col bg-[#a09ea0] text-[12px]">
      <div className="flex h-[19px] shrink-0 items-center bg-[#7c7e79] text-white">
        <div className="w-[315px]"><T w={87}>Design Browser</T></div>
        <Svg w={8} h={8} smooth><path d="M1 1l6 6M7 1L1 7" stroke="#fff" strokeWidth="1.300" /></Svg>
        <div className="ml-[9px]"><Svg w={12} h={12} smooth><circle cx="6" cy="6" r="5.200" stroke="#ddd" /><path d="M8 2.500v7L4 6z" fill="#eee" /></Svg></div>
      </div>
      <div className="flex h-[541px]">
        <BrowserPanel />
        <div className="flex flex-col pt-[2px]">
          <div className="-ml-[4px] flex h-[36px] w-[31px] items-center justify-center rounded-tr-[5px] border-b-2 border-r-2 border-t-2 border-b-[#222] border-r-[#222] border-t-white bg-[#e6e6e6]"><Tree w={20} h={22} /></div>
          {tabIcons.map((ic, i) => (
            <div key={i} className="mb-[3px] ml-[2px] flex h-[27px] w-[23px] items-center justify-center rounded-r-[4px] border-b-2 border-r-2 border-t border-b-[#222] border-r-[#222] border-t-white bg-[#e6e6e6] pb-[1px]">{ic}</div>
          ))}
        </div>
      </div>
    </div>
  );
}

/* ---------- signal names ---------- */
const signals: [string, number, boolean, boolean][] = [
  ["addressA[4:0]", 65, true, false],
  ["addressB[4:0]", 65, true, false],
  ["asel", 17, false, false],
  ["bsel", 18, false, true],
  ["clk", 12, false, true],
  ["dataIn[31:0]", 56, true, true],
  ["desc3", 27, true, false],
  ["handle3", 36, true, false],
  ["oen", 17, false, false],
  ["opsel[1:0]", 45, true, true],
  ["outPut[31:0]", 58, true, true],
  ["outsel[1:0]", 48, true, true],
  ["over", 20, false, false],
];

function NameColumn() {
  return (
    <div className="flex w-[192px] shrink-0 border-l-2 border-l-[#f3f3f3] bg-[#e6e6e6]">
      <div className="ml-[3px] flex w-[174px] shrink-0 flex-col">
        <div className="flex h-[49px] flex-col justify-end pb-[10px] text-[10.5px]">
          <div className="flex h-[15px] items-center">
            <div className="w-[52px]"><Svg w={14} h={14}><path d="M.5.500h13v13H.5z" fill="#efefef" stroke="#999" /><path d="M8 8l4 4" stroke="#7a5a20" strokeWidth="2" shapeRendering="auto" /><circle cx="6" cy="6" r="4" fill="#b9c9ea" stroke="#566a94" shapeRendering="auto" /><path d="M4 4h4v4H4z" fill="#c5313a" /></Svg></div>
            <T w={37}>Baseline</T><Caret /><T w={15} className="pl-[2px]">= 0</T>
          </div>
          <div className="flex h-[15px] items-center">
            <div className="w-[16px]"><Svg w={14} h={14}><path d="M.5.500h13v13H.5z" fill="#efefef" stroke="#999" /><path d="M2.500 3v9M11.500 3v9M3 7.500h9" stroke="#c5313a" /><path d="M3 3h3v4H3zM8 3h3v4H8z" fill="#c5313a" /></Svg></div>
            <T w={73}>Cursor-Baseline</T><Caret /><T w={15} className="pl-[2px]">= 0</T>
          </div>
        </div>
        <div className="flex h-[20px] items-center justify-between border-b border-b-white bg-[#b1b1b1] pl-[3px] pr-[4px] text-[12px]">
          <T w={31}>Name</T>
          <div className="flex items-center gap-[2px]"><Gear s={10} color="#111" fill="none" /><Caret /></div>
        </div>
        <div className="relative flex h-[471px] flex-col bg-black text-[10.5px] text-white">
          {signals.map(([name, w, bus, shade]) => (
            <div key={name} className={`flex h-[20px] shrink-0 items-center pl-[22px] pt-[2px] ${shade ? "bg-[#303430]" : ""}`}>
              <div className="w-[23px]">{bus ? <BusSig /> : <div className="pl-[2px]"><Sig /></div>}</div>
              <T w={w} className="leading-[14px]">{name}</T>
            </div>
          ))}
          <svg className="absolute left-0 top-0" width="174" height="264" shapeRendering="crispEdges">
            <path d="M9.500 16V250" stroke="#ccc" strokeDasharray="1 1" fill="none" />
            {signals.map(([n, , bus], i) => (
              <g key={n}>
                <path d={`M${bus ? 15 : 10} ${i * 20 + 11.5}H${bus ? 22 : 25}`} stroke="#ccc" strokeDasharray="1 1" />
                {bus && <path d={`M5.500 ${i * 20 + 7.5}h8v8h-8zM7 ${i * 20 + 11.5}h5M9.500 ${i * 20 + 9}v5`} fill="#000" stroke="#fff" />}
              </g>
            ))}
            <path d="M15 259.500H174" stroke="#e01824" />
            <path d="M13 260l4-4 4 4z" fill="#e01824" />
          </svg>
        </div>
        <div className="mt-[2px] flex h-[18px] items-stretch border-t border-t-[#888] bg-[#c4c4c4]">
          <ScrollArrow left />
          <Thumb className="mx-[1px] flex-1" />
          <ScrollArrow />
        </div>
      </div>
      <div className="ml-[6px] mt-[49px] h-[491px] w-px bg-black" />
    </div>
  );
}

/* ---------- waveforms ---------- */
const G = "#2fdc37";
const X = (t: number) => Math.round(539.9 + t * 0.3867) + 0.5;
const top = (r: number) => 289.5 + r * 20;
const steps = (a: number, b: number) => Array.from({ length: (b - a) / 40 + 1 }, (_, i) => a + i * 40);

function Bus({ row, ts }: { row: number; ts: number[] }) {
  const y = top(row);
  const d = ts.slice(0, -1).map((t, i) => {
    const a = X(t), b = X(ts[i + 1]);
    return `M${a + 2} ${y}H${b - 2}L${b} ${y + 7.5}L${b - 2} ${y + 15}H${a + 2}L${a} ${y + 7.5}Z`;
  });
  return <path d={d.join("")} stroke={G} fill="none" shapeRendering="crispEdges" />;
}
function V({ t, row, dx = 6, children }: { t: number; row: number; dx?: number; children: string }) {
  return <text x={X(t) + dx - 0.5} y={top(row) + 11} fill="#fff" fontSize="10" textLength={children.length * 5.9}>{children}</text>;
}
function Glitch({ t, y }: { t: number; y: number }) {
  const x = X(t);
  return (
    <g>
      <circle cx={x} cy={y} r="4.300" fill="#f7ea2a" />
      <path d={`M${x - 4} ${y + 2}h2.500v-4h3v4h2.500`} stroke="#111" strokeWidth="1.200" fill="none" />
    </g>
  );
}

function WavePanel() {
  const clk = steps(0, 1160).map((t) => `M${X(t)} ${top(4) + (t ? 15 : 0)}V${top(4)}H${X(t + 20)}V${top(4) + 15}H${X(t + 40)}`).join("");
  const glitches = [...steps(40, 160), ...steps(240, 480), 560, 640, ...steps(720, 1040)];
  return (
    <div className="flex w-[467px] shrink-0 flex-col">
      <svg width="467" height="541" viewBox="539 218 467 541" className="block bg-black font-['DejaVu_Sans_Mono']">
        <path d="M539 347h466v60H539zM539 467h466v60H539z" fill="#303430" />
        <g fontFamily="Liberation Sans" fontSize="12" fill="#fff">
          <path d="M541 235h75v16h-75zM541 252h61v15h-61z" fill="#f60606" />
          <text x="543" y="247" textLength="70">Baseline = 0</text>
          <text x="543" y="264" textLength="57">TimeA = 0</text>
          <text x="542" y="279">0</text>
          {[200, 400, 600, 800, 1000].map((t) => (
            <text key={t} x={X(t) + 1.500} y="279" textLength={t === 1000 ? 40 : 34}>{t}ns</text>
          ))}
        </g>
        <path shapeRendering="crispEdges" stroke="#fff" d={"M540 286.500H1005" + [200, 400, 600, 800, 1000, 1200].map((t) => `M${X(t)} 268V286M${X(t - 100)} 284V286`).join("")} />
        <Bus row={0} ts={[20, 460, 540, 620, ...steps(700, 1020), 1200]} />
        <Bus row={1} ts={[...steps(20, 460), 540, 620, ...steps(700, 1020), 1200]} />
        <Bus row={5} ts={[...steps(20, 460), 1200]} />
        <Bus row={6} ts={[0, 1200]} />
        <Bus row={7} ts={[0, 1200]} />
        <Bus row={9} ts={[20, 460, 740, 780, 820, 1200]} />
        <Bus row={10} ts={[40, ...steps(80, 480), 560, 640, ...steps(720, 1040), 1200]} />
        <Bus row={11} ts={[20, 460, 820, 1200]} />
        <g stroke={G} fill="none" shapeRendering="crispEdges">
          <path d={`M${X(20)} ${top(2) + 15}H${X(460)}V${top(2)}H1005`} />
          <path d={`M${X(20)} ${top(3) + 15}H${X(460)}V${top(3)}H${X(820)}V${top(3) + 15}H1005`} />
          <path d={clk} />
          <path d={`M${X(20)} ${top(8)}H1005`} />
          <path d={`M${X(40)} ${top(12) + 15}H1005M${X(480)} 529V540M${X(800)} 529V540`} />
        </g>
        <g stroke="#d81a1a" fill="none" shapeRendering="crispEdges">
          {[0, 1, 2, 3, 5, 8, 9, 11].map((r) => (
            <path key={r} d={`M540 ${top(r)}H${X(20)}V${top(r) + 15}H540`} />
          ))}
          <path d={`M540 ${top(10)}H550M540 ${top(10) + 15}H550M540 ${top(12)}H${X(40)}V${top(12) + 15}H540`} />
          <path d="M540.500 235V759" />
        </g>
        {glitches.map((t) => (
          <g key={t}>
            <path d={`M${X(t) - 2} ${top(10)}h4l-1 6v5h-2v-5z`} fill={t === 40 ? "#d9dc2a" : G} />
            <Glitch t={t} y={502.500} />
          </g>
        ))}
        <Glitch t={480} y={542} />
        <Glitch t={800} y={542} />
        <V t={20} row={0}>00</V><V t={460} row={0}>02</V><V t={540} row={0}>01</V><V t={620} row={0}>06</V><V t={1020} row={0}>02</V>
        <V t={460} row={1}>00</V><V t={540} row={1}>02</V><V t={620} row={1}>07</V><V t={1020} row={1}>02</V>
        <V t={460} row={5}>00000000</V>
        <V t={0} row={6}>2</V><V t={0} row={7}>2</V>
        <V t={0} dx={2} row={9}>x</V><V t={20} row={9}>1</V><V t={460} row={9}>0</V><V t={740} row={9}>1</V><V t={820} row={9}>1</V>
        <V t={0} dx={2} row={10}>x</V><V t={480} row={10}>55</V><V t={560} row={10}>00</V><V t={640} row={10}>00</V><V t={1040} row={10}>00000000</V>
        <V t={0} dx={2} row={11}>x</V><V t={20} row={11}>0</V><V t={460} row={11}>1</V><V t={820} row={11}>0</V>
        <path d="M549 493v7l4-3.500zM745 493v7l4-3.500zM776 493v7l4-3.500zM806 493v7l4-3.500z" fill="#fff" />
      </svg>
      <div className="relative mt-[1px] flex h-[18px] items-stretch border-t border-t-[#777] bg-[#c4c4c4]">
        <ScrollArrow left />
        <Thumb className="mx-[2px] mb-[2px] flex-1" />
        <ScrollArrow />
        <svg className="absolute left-0 top-0" width="467" height="17">
          <path d="M20 15.500H448" stroke="#111" strokeWidth="1.500" strokeDasharray="27 1" />
          <path d="M20 9.500l5 5v2H15v-2zM447 9.500l5 5v2h-10v-2z" fill="#ddd" stroke="#111" />
        </svg>
      </div>
    </div>
  );
}

function VScroll() {
  return (
    <div className="flex w-[13px] shrink-0 flex-col items-end bg-[#e6e6e6] pt-[69px]">
      <div className="flex h-[471px] w-[13px] flex-col border-l-2 border-t-2 border-[#8b8b8b] bg-[#c4c4c4]">
        <Svg w={11} h={13} smooth><path d="M5.500 1l5 11h-10z" fill="#e4e4e4" stroke="#888" /><path d="M5.500 1l-5 11" stroke="#fff" strokeWidth="1.500" /></Svg>
        <Thumb className="flex-1 !border-r-[3px]" />
        <Svg w={11} h={13} smooth><path d="M.5 1h10l-5 11z" fill="#e4e4e4" stroke="#888" /><path d="M.5 1h10" stroke="#fff" strokeWidth="1.500" /></Svg>
      </div>
    </div>
  );
}

/* ---------- desktop panel ---------- */
function Taskbar() {
  return (
    <div className="flex h-[31px] shrink-0 items-center border-b-2 border-t border-b-[#28506f] border-t-white bg-[#eeebe7] font-['DejaVu_Sans'] text-[12.5px] text-[#1c1c1c]">
      <div className="flex w-[27px] items-center"><div className="h-[25px] w-[22px] rounded-r-[3px] border border-l-0 border-[#8a8782] bg-white"><Svg w={20} h={23} smooth><path d="M1 2q5-1 8 5 3-6 8-5 3 3-2 9 5 5 2 10-4 1-8-5-4 6-8 5-2-5 2-10-5-5-2-9z" fill="#63c4f2" /><path d="M0 11q5-3 12-1l4-3 1 1 3 2-1 3-4 1-1 6h-1l-1-5H5l-2 4H2l1-6-3-1z" fill="#111" /></Svg></div></div>
      <div className="flex w-[9px] items-center"><div className="h-[20px] w-px bg-[#c2bfba]" /></div>
      <div className="w-[28px]"><Svg w={19} h={17} smooth><rect x=".5" y=".5" width="18" height="16" rx="1.500" fill="#8b908c" stroke="#4a4e4b" /><rect x="2.500" y="2.500" width="14" height="11" fill="#46544a" /><path d="M4 5l3 2-3 2M8 9.500h4" stroke="#c8d8cc" /></Svg></div>
      <div className="w-[27px]"><Svg w={19} h={18} smooth><path d="M1 8l10-3 4 8-8 4z" fill="#eef2f6" stroke="#5c6c80" /><path d="M17 1L7 12" stroke="#40536b" strokeWidth="2.500" /><path d="M2 9q3 5 8 5" stroke="#5c7ea8" strokeWidth="1.500" /></Svg></div>
      <div className="w-[27px]"><Svg w={19} h={20} smooth><path d="M1 1h17v8H1z" fill="#b9bcba" stroke="#8a8e8b" /><path d="M3 4h13" stroke="#e9e9e9" /><path d="M7 8h5v4h4l-2 3 1 3-5-1-1 3-3-3-5 1 2-4-2-2h6z" fill="#c8442e" /><path d="M8 12h3v5H8z" fill="#e99a45" /></Svg></div>
      <div className="w-[25px]"><Earth s={20} pale /></div>
      <div className="flex w-[15px] items-center"><div className="h-[23px] w-[6px] bg-[repeating-linear-gradient(#aaa7a2_0_1px,transparent_1px_3px)]" /></div>
      <div className="w-[22px]"><Svg w={16} h={14} smooth><path d="M1 2h5l1 2h6v8H2z" fill="#d9a556" stroke="#a57430" /><path d="M4 6h11l-2 6H2z" fill="#f3cf8e" stroke="#b98a45" /></Svg></div>
      <div className="w-[70px]"><T w={53}>Thuna...</T></div>
      <div className="w-[22px]"><WinGlyph /></div>
      <div className="w-[70px]"><T w={38}>xterm</T></div>
      <div className="w-[23px]"><Firefox /></div>
      <div className="w-[70px]"><T w={56}>[Gmail...</T></div>
      <div className="w-[23px]"><Firefox /></div>
      <div className="w-[64px]"><T w={56}>[Down...</T></div>
      <div className="flex h-[26px] w-[91px] shrink-0 items-center gap-[6px] rounded-[3px] border border-[#8c877f] bg-[#dbd5cb] pl-[8px]"><SmallWaves /><T w={56}>Wavef...</T></div>
      <div className="ml-[10px] w-[21px]"><WinGlyph /></div>
      <div className="w-[65px]"><T w={52}>Open ...</T></div>
      <div className="w-[34px]"><Svg w={24} h={23} smooth><path d="M1 1q4 6 11 6T23 1v14q0 7-11 7T1 15z" fill="#f3f3f3" stroke="#c4c4c4" /><path d="M3 5l2 5" stroke="#d23a3a" strokeWidth="1.500" /><circle cx="12" cy="15" r="2" fill="#6a8a86" stroke="#444" /></Svg></div>
      <div className="w-[21px]"><Svg w={13} h={16} smooth><path d="M1 4l2 11h7l2-11z" fill="#868b90" stroke="#3f4347" /><ellipse cx="6.500" cy="3.500" rx="5.500" ry="2.500" fill="#c3c8cc" stroke="#3f4347" /><path d="M4 8l1 5M9 8l-1 5" stroke="#ccc" /></Svg></div>
      <div className="flex h-[26px] w-[34px] shrink-0 items-center justify-center border-t border-[#2c5f94] bg-[#94c3f2]"><SmallWaves /></div>
      <div className="ml-px h-[26px] w-[34px] shrink-0 bg-[#b5a48f]" />
      <div className="ml-px h-[26px] w-[34px] shrink-0 bg-[#b5a48f]" />
      <div className="mr-[5px] h-[26px] w-[35px] shrink-0 bg-[#b5a48f]"><div className="flex h-[20px] w-[21px] items-center justify-center border border-black bg-[#eeebe7]"><Svg w={16} h={14} smooth><path d="M1 2h5l1 2h6v8H2z" fill="#d9a556" stroke="#a57430" /><path d="M4 6h11l-2 6H2z" fill="#f3cf8e" stroke="#b98a45" /></Svg></div></div>
      <div className="w-[29px]"><Svg w={21} h={18} smooth><path d="M1 2h18v13H1z" fill="#5f8fc6" stroke="#3d5f8a" /><path d="M5 4h10v10H5z" fill="#f4f4ee" /><path d="M0 1h4v4H0zM16 1h4v4h-4zM0 13h4v4H0zM16 13h4v4h-4z" fill="#93b8dd" stroke="#4c6c92" strokeWidth=".6" /><path d="M14 6l-4 6" stroke="#e8a126" strokeWidth="2.500" /></Svg></div>
      <div className="flex w-[6px] items-center"><div className="h-[20px] w-px bg-[#c2bfba]" /></div>
      <div className="w-[45px]"><T w={38}>18:42</T></div>
      <div className="flex w-[6px] items-center"><div className="h-[20px] w-px bg-[#c2bfba]" /></div>
      <Svg w={21} h={18} smooth><path d="M8 1h12v16H8z" fill="#6b5426" stroke="#2f2510" /><path d="M10 3h8v12h-8z" fill="#8f7339" /><circle cx="16" cy="9" r="1" fill="#f4d98a" /><path d="M1 4h4l4 5-4 5H2l3-5z" fill="#f4e9c0" stroke="#222" /></Svg>
    </div>
  );
}

export default function App() {
  return (
    <div className="flex h-[838px] w-[1019px] flex-col overflow-hidden bg-[#e6e6e6] font-['Liberation_Sans',sans-serif] text-black">
      <RemoteTitle />
      <WindowTitle />
      <MenuBar />
      <MainToolbar />
      <SearchToolbar />
      <TimeToolbar />
      <div className="h-[2px] shrink-0 border-t border-white" />
      <div className="flex h-[560px] shrink-0">
        <DesignBrowser />
        <NameColumn />
        <WavePanel />
        <VScroll />
      </div>
      <div className="relative flex h-[29px] shrink-0 flex-col">
        <div className="h-[5px] shrink-0 border-b border-t border-b-[#8a8a8a] border-t-[#8a8a8a] bg-white" />
        <div className="flex h-[21px] text-[12px]">
          <div className="ml-[907px] flex items-center border-l border-[#8a8a8a] pl-[3px]"><T w={104}>0  objects selected</T></div>
        </div>
        <div className="absolute left-0 top-[2px] flex h-[25px] w-[72px] items-center border border-l-0 border-black bg-[#ffffbe] font-['DejaVu_Sans'] text-[12.5px]"><T w={67}>Xfce Menu</T></div>
        <div className="mt-auto h-[2px] border-t border-[#8a8a8a] bg-white" />
      </div>
      <Taskbar />
    </div>
  );
}
